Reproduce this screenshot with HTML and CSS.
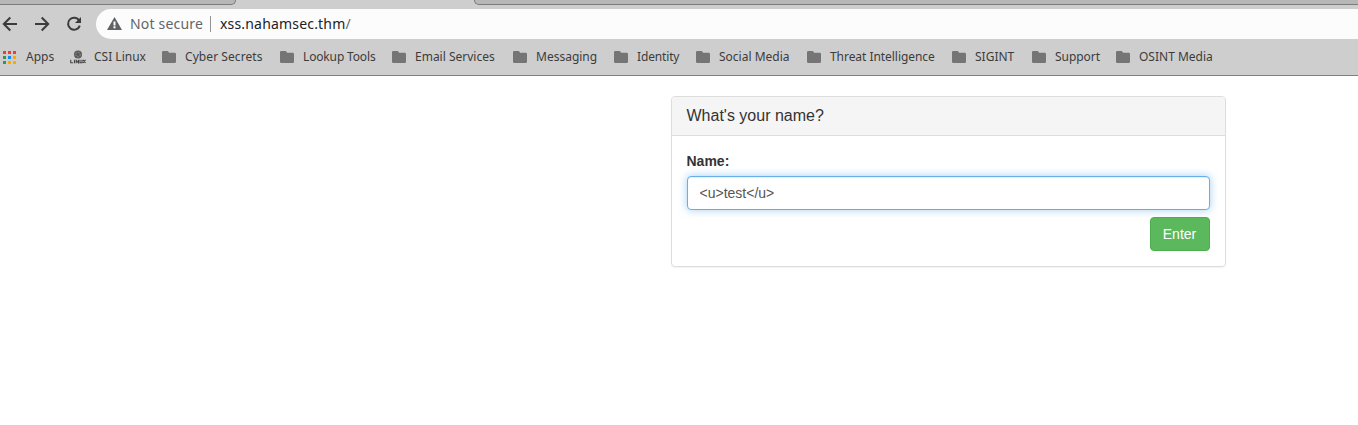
FILE: index.html
```html
<!DOCTYPE html>
<html lang="en">
<head>
<meta charset="utf-8">
<title>xss.nahamsec.thm</title>
<link rel="stylesheet" href="styles.css">
</head>
<body>
<svg class="defs" width="0" height="0"><symbol id="folder" viewBox="0 0 14 12"><path d="M1.3 0H5.8L7.2 1.7H12.7Q14 1.7 14 3V10.7Q14 12 12.7 12H1.3Q0 12 0 10.7V1.3Q0 0 1.3 0Z"/></symbol></svg>
<header class="browser">
  <div class="tabs"><div class="tab tab-left"></div><div class="tab tab-right"></div></div>
  <div class="toolbar">
    <nav class="nav">
      <svg width="16" height="16" viewBox="0 0 16 16"><path d="M15 8H2M8.3 1.5 1.8 8l6.5 6.5"/></svg>
      <svg width="16" height="16" viewBox="0 0 16 16"><path d="M1 8h13M7.7 1.5 14.200 8l-6.500 6.500"/></svg>
      <svg width="16" height="16" viewBox="0 0 16 16"><path d="M13.300 4.700A6 6 0 1 0 13.800 9.600"/><path class="solid" d="M15 1v6H9z"/></svg>
    </nav>
    <div class="address">
      <svg class="warning" width="15" height="13" viewBox="0 0 15 13"><path d="M7.500 0 15 13H0z"/><path class="mark" d="M6.500 4.500h2v4h-2zM6.500 9.300h2v2h-2z"/></svg>
      <span class="status">Not secure</span>
      <span class="url">xss.nahamsec.thm<i>/</i></span>
    </div>
  </div>
  <nav class="bookmarks">
    <span class="apps"><svg width="13" height="13" viewBox="0 0 13 13"><path fill="#f33b32" d="M0 0h3v3H0zM5 0h3v3H5zM10 0h3v3h-3z"/><path fill="#2b9d50" d="M0 5h3v3H0zM0 10h3v3H0z"/><path fill="#1b86f5" d="M5 5h3v3H5z"/><path fill="#f9ab00" d="M10 5h3v3h-3zM5 10h3v3H5zM10 10h3v3h-3z"/></svg>Apps</span>
    <span class="linux"><svg width="16" height="14" viewBox="0 0 16 14"><circle cx="8" cy="4.500" r="4"/><circle class="ring" cx="8" cy="4.500" r="2.300"/><path class="line" d="M.7 9.800v3h2.500M4.500 9.800v3.500M6.200 13.300v-3l2.300 2.500v-3M10 9.800v3h2v-3M13 9.800l2.500 3.200M15.500 9.800 13 13"/></svg>CSI Linux</span>
    <span class="loose"><svg class="folder"><use href="#folder"/></svg>Cyber Secrets</span>
    <span class="snug"><svg class="folder"><use href="#folder"/></svg>Lookup Tools</span>
    <span><svg class="folder"><use href="#folder"/></svg>Email Services</span>
    <span><svg class="folder"><use href="#folder"/></svg>Messaging</span>
    <span class="snug"><svg class="folder"><use href="#folder"/></svg>Identity</span>
    <span><svg class="folder"><use href="#folder"/></svg>Social Media</span>
    <span class="tight"><svg class="folder"><use href="#folder"/></svg>Threat Intelligence</span>
    <span><svg class="folder"><use href="#folder"/></svg>SIGINT</span>
    <span class="tight"><svg class="folder"><use href="#folder"/></svg>Support</span>
    <span><svg class="folder"><use href="#folder"/></svg>OSINT Media</span>
  </nav>
</header>
<main>
  <form class="panel">
    <h1>What's your name?</h1>
    <div class="panel-body">
      <label for="name">Name:</label>
      <input id="name" type="text" value="&lt;u&gt;test&lt;/u&gt;">
      <button type="button">Enter</button>
    </div>
  </form>
</main>
</body>
</html>
```
FILE: styles.css
```css
* { box-sizing: border-box; }
body { margin: 0; height: 425px; overflow: hidden; background: #fff; color: #333; font: 14px/20px "Liberation Sans", Arial, sans-serif; }
.defs { display: block; height: 0; }
.browser { height: 76px; background: #cecece; border-bottom: 1px solid #808080; font-family: "Noto Sans", sans-serif; }
.tabs { display: flex; justify-content: space-between; height: 5px; }
.tab { height: 5px; background: #b7b7b7; border-bottom: 1px solid #7b7b7b; }
.tab-left { width: 236px; border-right: 1px solid #7b7b7b; border-bottom-right-radius: 5px; }
.tab-right { width: 884px; border-left: 1px solid #7b7b7b; border-bottom-left-radius: 5px; }
.toolbar { display: flex; height: 34px; padding-top: 4px; }
.nav { display: flex; align-items: center; gap: 16px; width: 96px; padding-left: 2px; }
.nav svg { fill: none; stroke: #3b3b3b; stroke-width: 2; }
.nav .solid { fill: #3b3b3b; stroke: none; }
.address { display: flex; align-items: center; flex: 1; height: 30px; padding-left: 11px; border-radius: 15px 0 0 15px; background: #fcfcfc; font-size: 14px; letter-spacing: .18px; }
.warning { margin-top: -1px; fill: #5f6368; }
.warning .mark { fill: #fff; }
.status { width: 81px; height: 16px; margin-left: 8px; border-right: 1px solid #929292; color: #62666b; line-height: 16px; white-space: nowrap; }
.url { margin-left: 9px; color: #202124; }
.url i { font-style: normal; color: #666a6e; }
.bookmarks { display: grid; grid-template-columns: 67px 92px 118px 112px 121px 101px 82px 111px 145px 80px 84px auto; align-items: center; height: 36px; padding-left: 3px; color: #3c3c3c; font-size: 12px; line-height: 16px; white-space: nowrap; }
.bookmarks span { display: flex; align-items: center; gap: 9px; }
.bookmarks .apps { gap: 10px; }
.bookmarks .linux { gap: 8px; }
.bookmarks .loose { letter-spacing: .07px; }
.bookmarks .snug { letter-spacing: -.15px; }
.bookmarks .tight { letter-spacing: -.05px; }
.linux svg { fill: #5a5a5a; }
.linux .ring { fill: none; stroke: #aaa; stroke-width: .7; stroke-dasharray: 1.5 1; }
.linux .line { fill: none; stroke: #444; stroke-width: 1.1; }
.folder { width: 14px; height: 12px; fill: #757575; }
main { padding: 20px 132.500px 0 670.500px; }
.panel { height: 171px; border: 1px solid #ddd; border-radius: 4px; box-shadow: 0 1px 1px rgba(0,0,0,.05); }
h1 { height: 39px; margin: 0; padding: 10px 15px; border-bottom: 1px solid #ddd; border-radius: 3px 3px 0 0; background: #f5f5f5; font-size: 16px; font-weight: 400; line-height: 18px; }
.panel-body { display: flex; flex-direction: column; padding: 15px; }
label { margin-bottom: 5px; font-weight: 700; }
input { height: 34px; padding: 6px 12px; border: 1px solid #66afe9; border-radius: 4px; outline: none; background: #fff; color: #555; font: inherit; box-shadow: inset 0 1px 1px rgba(0,0,0,.075), 0 0 8px rgba(102,175,233,.6); }
button { align-self: flex-end; width: 60px; height: 34px; margin-top: 7px; padding: 0; border: 1px solid #4cae4c; border-radius: 4px; background: #5cb85c; color: #fff; font: inherit; }
```
